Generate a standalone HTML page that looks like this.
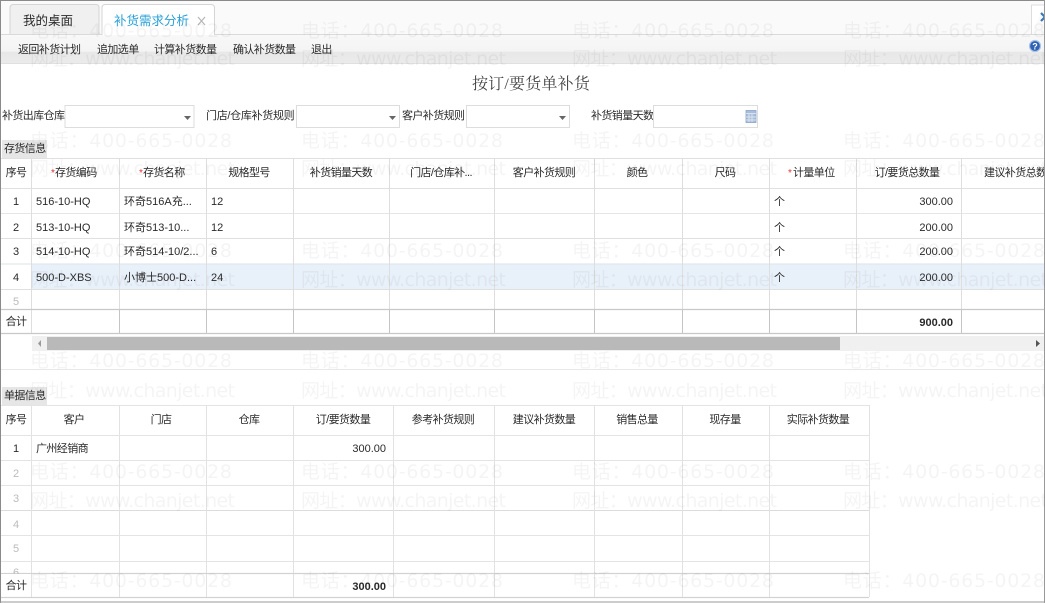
<!DOCTYPE html>
<html lang="zh">
<head>
<meta charset="utf-8">
<title>补货需求分析</title>
<style>
html,body{margin:0;padding:0;background:#fff;width:1045px;height:603px;overflow:hidden}
svg{display:block;filter:blur(.3px)}
text{font-family:"Liberation Sans","Noto Sans CJK SC",sans-serif;font-size:11px;letter-spacing:-.6px;fill:#2a2a2a}
.d{font-size:11px;letter-spacing:0}
.c{text-anchor:middle}
.r{text-anchor:end}
.w{font-family:"DejaVu Sans","Noto Sans CJK SC",sans-serif;font-size:19px;letter-spacing:0;fill:#000;fill-opacity:.042}
.red{fill:#e33;font-size:10px;letter-spacing:0}
.g{fill:#bbb;font-size:11px;letter-spacing:0}
</style>
</head>
<body>
<svg width="1045" height="603" viewBox="0 0 1045 603" xmlns="http://www.w3.org/2000/svg">
<defs>
<linearGradient id="tb" x1="0" y1="0" x2="0" y2="1">
<stop offset="0" stop-color="#f8f8f8"/><stop offset=".6" stop-color="#f4f4f4"/><stop offset=".62" stop-color="#e8e8e8"/><stop offset="1" stop-color="#ebebeb"/>
</linearGradient>
</defs>
<rect width="1045" height="603" fill="#fff"/>
<!-- top strip -->
<rect x="0" y="0" width="1045" height="34" fill="#fafafa"/>
<rect x="0" y="34" width="1045" height="29" fill="url(#tb)"/>
<line x1="0" y1="34.5" x2="1045" y2="34.5" stroke="#dadada"/>
<line x1="0" y1="63.5" x2="1045" y2="63.5" stroke="#e0e0e0"/>
<!-- tabs -->
<path d="M10 34V8q0-3.500 3.500-3.500H96q3 0 3 3.500V34" fill="#f0f0f0" stroke="#d5d5d5"/>
<path d="M102 35V8q0-3.500 3.500-3.500H211q3.500 0 3.500 3.500V35" fill="#fff" stroke="#d5d5d5"/>
<text x="23" y="25" style="font-size:12.500px;letter-spacing:0">我的桌面</text>
<text x="114" y="25" style="font-size:12.500px;letter-spacing:0;fill:#27a0d8">补货需求分析</text>
<path d="M198 17l7 8M205 17l-7 8" stroke="#b5b5b5" stroke-width="1.200" fill="none"/>
<!-- toolbar -->
<text x="18" y="53">返回补货计划</text>
<text x="97" y="53">追加选单</text>
<text x="154" y="53">计算补货数量</text>
<text x="233" y="53">确认补货数量</text>
<text x="311" y="53">退出</text>
<!-- right icons -->
<path d="M1031.500 34V5H1045" fill="#fff" stroke="#ddd"/>
<path d="M1041 13l4 4M1041 21l4-4" stroke="#3a77b5" stroke-width="2.200" fill="none"/>
<circle cx="1035" cy="46" r="5.500" fill="#2f62b5" stroke="#a9c3e6" stroke-width="1.200"/>
<text x="1035" y="49.500" class="c" style="font-size:9px;letter-spacing:0;font-weight:bold;fill:#fff">?</text>
<!-- title -->
<text x="531" y="89" class="c" style="font-family:'Liberation Serif','Noto Serif CJK SC',serif;font-size:16px;fill:#444;letter-spacing:.2px">按订/要货单补货</text>
<!-- filter -->
<text x="2" y="119">补货出库仓库</text>
<rect x="65" y="105.500" width="129" height="22" fill="#fff" stroke="#ddd"/>
<path d="M184 116h7l-3.500 4z" fill="#666"/>
<text x="206" y="119" style="letter-spacing:-.3px">门店/仓库补货规则</text>
<rect x="296.500" y="105.500" width="103" height="22" fill="#fff" stroke="#ddd"/>
<path d="M389 116h7l-3.500 4z" fill="#666"/>
<text x="402" y="119">客户补货规则</text>
<rect x="466.500" y="105.500" width="103" height="22" fill="#fff" stroke="#ddd"/>
<path d="M559 116h7l-3.500 4z" fill="#666"/>
<text x="591" y="119">补货销量天数</text>
<rect x="653.500" y="105.500" width="104" height="22" fill="#fff" stroke="#ddd"/>
<rect x="746" y="110.500" width="10" height="12" fill="#a9bedb" stroke="#8ba3c7" stroke-width=".8"/>
<path d="M746 113.500h10M749 114v8M752 114v8M746 117h10M746 120h10" stroke="#e6edf6" stroke-width=".8" fill="none"/>

<!-- section 1 tab -->
<rect x="2" y="140" width="45" height="18" fill="#e6e6e6"/>
<text x="4" y="152">存货信息</text>

<!-- table 1 -->
<rect x="31" y="264" width="1014" height="25" fill="#e8f0f9"/>
<g stroke="#e0e0e0" fill="none">
<path d="M0 158.500H1045M0 188.500H1045M0 238.500H1045M0 289.500H1045"/>
<path d="M0 213.500H1045" stroke="#e6e6e6"/>
<path d="M0 264H1045" stroke="#dde3ea"/>
<path d="M31.500 158V333M119.500 158V333M206.500 158V333M293.500 158V333M389.500 158V333M494.500 158V333M594.500 158V333M682.500 158V333M769.500 158V333M856.500 158V333M961.500 158V333" stroke="#dedede"/>
</g>
<path d="M0 309.500H1045M0 333.500H1045" stroke="#c8c8c8" stroke-width="1.300" fill="none"/>
<path d="M119.500 310V333M206.500 310V333M293.500 310V333M389.500 310V333M494.500 310V333M594.500 310V333M682.500 310V333M769.500 310V333M856.500 310V333M961.500 310V333" stroke="#c4c4c4" fill="none"/>
<g>
<text x="16" y="176" class="c">序号</text>
<text x="51" y="176" class="red">*</text><text x="55" y="176">存货编码</text>
<text x="139" y="176" class="red">*</text><text x="143" y="176">存货名称</text>
<text x="249" y="176" class="c">规格型号</text>
<text x="341" y="176" class="c">补货销量天数</text>
<text x="441" y="176" class="c">门店/仓库补...</text>
<text x="544" y="176" class="c">客户补货规则</text>
<text x="637" y="176" class="c">颜色</text>
<text x="725" y="176" class="c">尺码</text>
<text x="788" y="176" class="red">*</text><text x="793" y="176">计量单位</text>
<text x="907" y="176" class="c">订/要货总数量</text>
<text x="984" y="176">建议补货总数</text>

<text x="16" y="205" class="c d">1</text><text x="36" y="205" class="d">516-10-HQ</text><text x="124" y="205" class="d">环奇516A充...</text><text x="211" y="205" class="d">12</text><text x="774" y="205">个</text><text x="953" y="205" class="r d">300.00</text>
<text x="16" y="231" class="c d">2</text><text x="36" y="231" class="d">513-10-HQ</text><text x="124" y="231" class="d">环奇513-10...</text><text x="211" y="231" class="d">12</text><text x="774" y="231">个</text><text x="953" y="231" class="r d">200.00</text>
<text x="16" y="255" class="c d">3</text><text x="36" y="255" class="d">514-10-HQ</text><text x="124" y="255" class="d">环奇514-10/2...</text><text x="211" y="255" class="d">6</text><text x="774" y="255">个</text><text x="953" y="255" class="r d">200.00</text>
<text x="16" y="281" class="c d">4</text><text x="36" y="281" class="d">500-D-XBS</text><text x="124" y="281" class="d">小博士500-D...</text><text x="211" y="281" class="d">24</text><text x="774" y="281">个</text><text x="953" y="281" class="r d">200.00</text>
<text x="16" y="305" class="c g">5</text>
<text x="16" y="325" class="c">合计</text>
<text x="953" y="326" class="r d" style="font-weight:bold">900.00</text>
</g>

<!-- scrollbar -->
<rect x="32" y="336" width="1013" height="15" fill="#f0f0f0"/>
<rect x="47" y="337" width="793" height="13" fill="#b9b9b9"/>
<path d="M41 340v7l-3-3.500z" fill="#999"/>
<path d="M1036 340v7l4-3.500z" fill="#555"/>
<line x1="0" y1="369.500" x2="1045" y2="369.500" stroke="#e8e8e8"/>

<!-- section 2 tab -->
<rect x="2" y="387" width="45" height="18" fill="#e6e6e6"/>
<text x="4" y="399">单据信息</text>

<!-- table 2 -->
<g stroke="#e4e4e4" fill="none">
<path d="M0 405.500H869M0 435.500H869M0 460.500H869M0 485.500H869M0 535.500H869M0 561.500H869"/>
<path d="M0 510.500H869" stroke="#dcdcdc"/>
<path d="M31.500 405V597M119.500 405V597M206.500 405V597M293.500 405V597M393.500 405V597M494.500 405V597M594.500 405V597M682.500 405V597M769.500 405V597M869.500 405V597" stroke="#e2e2e2"/>
</g>
<path d="M0 573.500H869M0 597.500H869" stroke="#d2d2d2" stroke-width="1.200" fill="none"/>
<g>
<text x="16" y="423" class="c">序号</text>
<text x="74" y="423" class="c">客户</text>
<text x="161" y="423" class="c">门店</text>
<text x="249" y="423" class="c">仓库</text>
<text x="343" y="423" class="c">订/要货数量</text>
<text x="443" y="423" class="c">参考补货规则</text>
<text x="544" y="423" class="c">建议补货数量</text>
<text x="637" y="423" class="c">销售总量</text>
<text x="725" y="423" class="c">现存量</text>
<text x="818" y="423" class="c">实际补货数量</text>
<text x="16" y="452" class="c d">1</text>
<text x="36" y="452">广州经销商</text>
<text x="386" y="452" class="r d">300.00</text>
<text x="16" y="477" class="c g">2</text>
<text x="16" y="502" class="c g">3</text>
<text x="16" y="528" class="c g">4</text>
<text x="16" y="552" class="c g">5</text>
<text x="16" y="576" class="c g">6</text>
<rect x="1" y="574" width="30" height="22" fill="#fff"/>
<text x="16" y="589" class="c">合计</text>
<text x="386" y="590" class="r d" style="font-weight:bold">300.00</text>
</g>

<!-- outer frame -->
<path d="M0.500 603V0.500H1045" fill="none" stroke="#8a8a8a"/>
<path d="M0 602H1045" stroke="#999"/>
<path d="M1044.500 0V603" stroke="#999"/>

<!-- watermark -->
<g>
<text class="w" x="30" y="37" textLength="202">电话：400-665-0028</text><text class="w" x="301" y="37" textLength="202">电话：400-665-0028</text><text class="w" x="572" y="37" textLength="202">电话：400-665-0028</text><text class="w" x="843" y="37" textLength="202">电话：400-665-0028</text>
<text class="w" x="30" y="65" textLength="205">网址：www.chanjet.net</text><text class="w" x="301" y="65" textLength="205">网址：www.chanjet.net</text><text class="w" x="572" y="65" textLength="205">网址：www.chanjet.net</text><text class="w" x="843" y="65" textLength="205">网址：www.chanjet.net</text>
<text class="w" x="30" y="147" textLength="202">电话：400-665-0028</text><text class="w" x="301" y="147" textLength="202">电话：400-665-0028</text><text class="w" x="572" y="147" textLength="202">电话：400-665-0028</text><text class="w" x="843" y="147" textLength="202">电话：400-665-0028</text>
<text class="w" x="30" y="175" textLength="205">网址：www.chanjet.net</text><text class="w" x="301" y="175" textLength="205">网址：www.chanjet.net</text><text class="w" x="572" y="175" textLength="205">网址：www.chanjet.net</text><text class="w" x="843" y="175" textLength="205">网址：www.chanjet.net</text>
<text class="w" x="30" y="257" textLength="202">电话：400-665-0028</text><text class="w" x="301" y="257" textLength="202">电话：400-665-0028</text><text class="w" x="572" y="257" textLength="202">电话：400-665-0028</text><text class="w" x="843" y="257" textLength="202">电话：400-665-0028</text>
<text class="w" x="30" y="286" textLength="205">网址：www.chanjet.net</text><text class="w" x="301" y="286" textLength="205">网址：www.chanjet.net</text><text class="w" x="572" y="286" textLength="205">网址：www.chanjet.net</text><text class="w" x="843" y="286" textLength="205">网址：www.chanjet.net</text>
<text class="w" x="30" y="367" textLength="202">电话：400-665-0028</text><text class="w" x="301" y="367" textLength="202">电话：400-665-0028</text><text class="w" x="572" y="367" textLength="202">电话：400-665-0028</text><text class="w" x="843" y="367" textLength="202">电话：400-665-0028</text>
<text class="w" x="30" y="397" textLength="205">网址：www.chanjet.net</text><text class="w" x="301" y="397" textLength="205">网址：www.chanjet.net</text><text class="w" x="572" y="397" textLength="205">网址：www.chanjet.net</text><text class="w" x="843" y="397" textLength="205">网址：www.chanjet.net</text>
<text class="w" x="30" y="478" textLength="202">电话：400-665-0028</text><text class="w" x="301" y="478" textLength="202">电话：400-665-0028</text><text class="w" x="572" y="478" textLength="202">电话：400-665-0028</text><text class="w" x="843" y="478" textLength="202">电话：400-665-0028</text>
<text class="w" x="30" y="507" textLength="205">网址：www.chanjet.net</text><text class="w" x="301" y="507" textLength="205">网址：www.chanjet.net</text><text class="w" x="572" y="507" textLength="205">网址：www.chanjet.net</text><text class="w" x="843" y="507" textLength="205">网址：www.chanjet.net</text>
<text class="w" x="30" y="587" textLength="202">电话：400-665-0028</text><text class="w" x="301" y="587" textLength="202">电话：400-665-0028</text><text class="w" x="572" y="587" textLength="202">电话：400-665-0028</text><text class="w" x="843" y="587" textLength="202">电话：400-665-0028</text>
</g>
</svg>
</body>
</html>
